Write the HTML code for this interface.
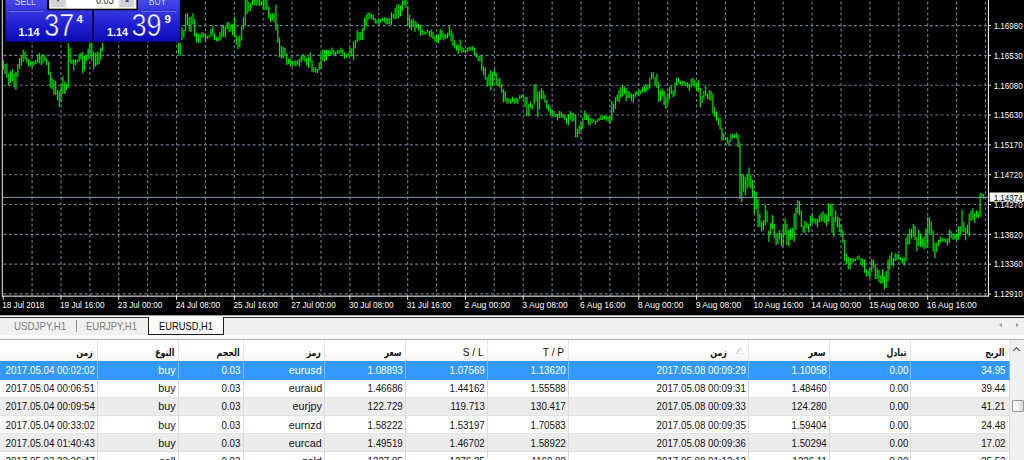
<!DOCTYPE html>
<html lang="en"><head><meta charset="utf-8"><title>EURUSD,H1</title>
<style>
html,body{margin:0;padding:0;background:#fff;}
body{width:1024px;height:460px;overflow:hidden;position:relative;font-family:"Liberation Sans",sans-serif;}
.chart{position:absolute;left:0;top:0;display:block}
.tabs{position:absolute;left:0;top:318px;width:1024px;height:17px;background:#f0f0f0;font-size:11px;color:#7d7d7d;}
.tabs .tab{position:absolute;top:1.7px;line-height:12px;display:inline-block;transform:scaleX(.884);transform-origin:0 0;white-space:nowrap}
.tabs .sep{position:absolute;left:76px;top:2px;width:1px;height:12.3px;background:#8a8a8a}
.atab{position:absolute;left:148px;top:-1px;width:73.6px;height:16.6px;background:#fff;border:1.1px solid #1e1e1e;border-top:none;border-right-width:1.5px;border-bottom-width:1.5px;color:#000}
.atab span{position:absolute;left:9.9px;top:2.7px;line-height:12px;display:inline-block;transform:scaleX(.85);transform-origin:0 0;white-space:nowrap}
.nl,.nr{position:absolute;top:5px;width:0;height:0;border-top:2.6px solid transparent;border-bottom:2.6px solid transparent}
.nl{left:999.4px;border-right:3.2px solid #9c9c9c}
.nr{left:1016.2px;border-left:3.2px solid #9c9c9c}
.band{position:absolute;left:0;top:335px;width:1024px;height:4.2px;background:#fafafa;border-bottom:1px solid #b2b2b2}
.grid{position:absolute;left:0;top:340.2px;width:1024px;height:120px;background:#fff;overflow:hidden;font-size:11px;color:#111}
.hdr{position:absolute;left:0;top:0;width:1010.2px;height:20.4px;background:linear-gradient(#fff,#fff 50%,#f4f4f4);border-bottom:1px solid #dadada}
.hc{position:absolute;top:0;height:20.4px;box-sizing:border-box;border-right:1px solid #e7e7e7;text-align:right;font-family:"DejaVu Sans","Liberation Sans",sans-serif;font-weight:bold;font-size:10.4px;color:#111;direction:rtl}
.hc span{position:absolute;right:3.4px;top:3.7px;line-height:16px;white-space:nowrap;display:inline-block;transform:scaleX(.755);transform-origin:100% 0}
.hc.lat{font-family:"Liberation Sans",sans-serif;font-weight:normal;font-size:11px;direction:ltr}
.hc.lat span{top:3.8px;transform:scaleX(.92);transform-origin:100% 0}
.sort{position:absolute;left:736.2px;top:7.3px;display:block}
.row{position:absolute;left:0;width:1010.2px;height:18.22px;background:#fff;border-bottom:1px solid #e2e2e2;box-sizing:border-box}
.row.alt{background:#ececec}
.row.sel{background:#3399ff;color:#fff;border-bottom-color:#3399ff}
.c{position:absolute;top:0;height:100%;box-sizing:border-box;border-right:1px solid #dcdcdc;}
.row.sel .c{border-right-color:#7fbcff}
.c span{position:absolute;right:1.9px;top:2.6px;line-height:13px;white-space:nowrap;display:inline-block;transform:scaleX(.885);transform-origin:100% 0}
.c span.a{transform:scaleX(.98)}
.sb{position:absolute;left:1010.2px;top:0;width:15px;height:121px;background:#f0f0f0}
.sb .up{position:absolute;left:4.2px;top:7.4px;width:5px;height:5px;border-left:1.7px solid #4a4a4a;border-top:1.7px solid #4a4a4a;transform:rotate(45deg) ;box-sizing:border-box}
.sb .thumb{position:absolute;left:1.8px;top:60px;width:11.6px;height:12.2px;background:linear-gradient(90deg,#fff 20%,#d9d9d9);border:1px solid #969696;box-sizing:border-box;border-radius:1px}
</style></head>
<body>
<svg class="chart" width="1024" height="318" viewBox="0 0 1024 318">
<rect x="0" y="0" width="1024" height="318" fill="#000"/>
<g stroke="#778899" stroke-width="1.15" stroke-dasharray="2.9 2.517" fill="none" opacity="0.92">
<line x1="32.09" y1="-3.82" x2="32.09" y2="296"/>
<line x1="60.98" y1="-3.82" x2="60.98" y2="296"/>
<line x1="89.87" y1="-3.82" x2="89.87" y2="296"/>
<line x1="118.76" y1="-3.82" x2="118.76" y2="296"/>
<line x1="147.65" y1="-3.82" x2="147.65" y2="296"/>
<line x1="176.54" y1="-3.82" x2="176.54" y2="296"/>
<line x1="205.43" y1="-3.82" x2="205.43" y2="296"/>
<line x1="234.32" y1="-3.82" x2="234.32" y2="296"/>
<line x1="263.21" y1="-3.82" x2="263.21" y2="296"/>
<line x1="292.10" y1="-3.82" x2="292.10" y2="296"/>
<line x1="320.99" y1="-3.82" x2="320.99" y2="296"/>
<line x1="349.88" y1="-3.82" x2="349.88" y2="296"/>
<line x1="378.77" y1="-3.82" x2="378.77" y2="296"/>
<line x1="407.66" y1="-3.82" x2="407.66" y2="296"/>
<line x1="436.55" y1="-3.82" x2="436.55" y2="296"/>
<line x1="465.44" y1="-3.82" x2="465.44" y2="296"/>
<line x1="494.33" y1="-3.82" x2="494.33" y2="296"/>
<line x1="523.22" y1="-3.82" x2="523.22" y2="296"/>
<line x1="552.11" y1="-3.82" x2="552.11" y2="296"/>
<line x1="581.00" y1="-3.82" x2="581.00" y2="296"/>
<line x1="609.89" y1="-3.82" x2="609.89" y2="296"/>
<line x1="638.78" y1="-3.82" x2="638.78" y2="296"/>
<line x1="667.67" y1="-3.82" x2="667.67" y2="296"/>
<line x1="696.56" y1="-3.82" x2="696.56" y2="296"/>
<line x1="725.45" y1="-3.82" x2="725.45" y2="296"/>
<line x1="754.34" y1="-3.82" x2="754.34" y2="296"/>
<line x1="783.23" y1="-3.82" x2="783.23" y2="296"/>
<line x1="812.12" y1="-3.82" x2="812.12" y2="296"/>
<line x1="841.01" y1="-3.82" x2="841.01" y2="296"/>
<line x1="869.90" y1="-3.82" x2="869.90" y2="296"/>
<line x1="898.79" y1="-3.82" x2="898.79" y2="296"/>
<line x1="927.68" y1="-3.82" x2="927.68" y2="296"/>
<line x1="956.57" y1="-3.82" x2="956.57" y2="296"/>
<line x1="985.46" y1="-3.82" x2="985.46" y2="296"/>
<line x1="182.26" y1="25.55" x2="988" y2="25.55"/>
<line x1="3.50" y1="55.38" x2="988" y2="55.38"/>
<line x1="3.50" y1="85.21" x2="988" y2="85.21"/>
<line x1="3.50" y1="115.04" x2="988" y2="115.04"/>
<line x1="3.50" y1="144.87" x2="988" y2="144.87"/>
<line x1="3.50" y1="174.70" x2="988" y2="174.70"/>
<line x1="3.50" y1="204.53" x2="988" y2="204.53"/>
<line x1="3.50" y1="234.36" x2="988" y2="234.36"/>
<line x1="3.50" y1="264.19" x2="988" y2="264.19"/>
<line x1="3.50" y1="293.80" x2="988" y2="293.80"/>
</g>
<g stroke="#00ff00" stroke-opacity="0.15" stroke-width="2.0" fill="none">
<path d="M3.32 60.3V69.6M5.12 64.0V74.0M6.93 63.4V78.0M8.73 73.5V86.0M10.54 71.0V83.0M12.34 69.0V81.0M14.15 73.5V87.6M15.95 72.0V90.0M17.76 64.0V76.7M19.57 58.0V69.0M21.37 56.0V66.0M23.18 49.8V61.8M24.98 51.6V59.5M26.79 57.0V62.6M28.59 59.5V66.5M30.40 61.0V66.5M32.20 61.8V67.3M34.01 61.0V65.0M35.81 60.0V64.0M37.62 54.8V62.6M39.43 53.0V63.4M41.23 55.5V65.0M43.04 54.0V63.4M44.84 55.5V61.0M46.65 58.0V65.0M48.45 61.8V75.0M50.26 72.0V87.6M52.06 78.0V89.0M53.87 79.8V94.7M55.68 81.0V94.7M57.48 90.0V100.0M59.29 90.8V107.0M61.09 84.5V101.7M62.90 76.0V94.0M64.70 81.4V94.0M66.51 83.7V90.0M68.31 43.0V87.6M70.12 47.7V62.6M71.92 59.5V64.0M73.73 59.5V70.4M75.54 59.5V65.0M77.34 59.5V62.6M79.15 54.0V61.8M80.95 53.0V59.5M82.76 51.6V73.5M84.56 55.5V70.4M86.37 54.8V61.0M88.17 48.5V59.5M89.98 43.0V56.0M91.79 43.0V61.0M93.59 51.6V69.6M95.40 53.0V66.5M97.20 51.6V65.0M99.01 52.4V64.0M100.81 47.7V60.0M102.62 43.0V51.6M178.45 43.0V54.0M180.25 43.0V55.5M182.06 27.4V40.0M183.87 29.7V37.6M185.67 14.0V31.3M187.48 13.3V25.0M189.28 17.2V31.3M191.09 16.4V32.0M192.89 13.3V24.3M194.70 18.8V36.8M196.50 32.9V42.3M198.31 33.6V43.0M200.12 34.4V43.0M201.92 32.0V37.6M203.73 32.9V37.6M205.53 33.6V41.5M207.34 36.0V39.0M209.14 35.2V37.6M210.95 29.0V36.8M212.75 25.8V35.2M214.56 33.6V40.0M216.36 36.8V41.5M218.17 36.8V41.5M219.98 32.0V40.7M221.78 25.0V37.6M223.59 25.0V36.8M225.39 26.6V37.6M227.20 22.0V29.0M229.00 22.0V32.0M230.81 25.0V31.3M232.61 24.3V35.2M234.42 17.2V36.8M236.22 35.2V44.6M238.03 36.8V49.3M239.84 35.2V47.0M241.64 25.8V40.7M243.45 17.2V29.7M245.25 -2.0V25.8M247.06 -2.0V14.0M248.86 1.5V11.7M250.67 3.0V11.0M252.47 -2.0V4.7M254.28 -2.0V5.5M256.09 -2.0V5.5M257.89 -2.0V5.5M259.70 -2.0V6.3M261.50 1.5V5.5M263.31 -2.0V8.6M265.11 -2.0V10.0M266.92 -2.0V10.0M268.72 6.3V18.8M270.53 13.3V22.0M272.33 13.3V20.3M274.14 13.3V22.0M275.95 4.7V30.5M277.75 24.3V43.0M279.56 37.6V57.0M281.36 46.0V58.7M283.17 47.0V58.0M284.97 47.7V56.3M286.78 53.2V65.0M288.58 58.7V64.2M290.39 58.7V66.5M292.20 61.0V66.5M294.00 61.0V65.7M295.81 60.3V66.5M297.61 60.3V65.0M299.42 58.7V66.5M301.22 55.5V62.6M303.03 54.0V60.3M304.83 55.5V61.8M306.64 58.0V65.0M308.44 57.0V68.0M310.25 52.4V62.6M312.06 60.3V72.0M313.86 67.3V72.0M315.67 67.3V72.5M317.47 69.0V73.0M319.28 62.6V70.4M321.08 53.2V69.0M322.89 49.3V61.0M324.69 50.0V61.8M326.50 50.0V60.3M328.31 50.0V56.3M330.11 50.0V55.5M331.92 47.7V54.8M333.72 50.0V54.8M335.53 51.6V56.3M337.33 50.0V54.0M339.14 50.0V54.0M340.94 47.7V53.2M342.75 49.3V56.3M344.56 52.4V58.7M346.36 54.8V58.0M348.17 53.2V57.0M349.97 47.7V56.3M351.78 48.5V56.3M353.58 41.5V60.3M355.39 40.0V48.5M357.19 29.7V42.3M359.00 32.0V40.7M360.80 32.0V40.0M362.61 28.2V40.0M364.42 18.0V30.5M366.22 14.9V25.8M368.03 12.5V20.3M369.83 12.5V18.8M371.64 14.0V19.6M373.44 14.9V20.3M375.25 18.0V23.5M377.05 19.6V23.5M378.86 19.6V25.0M380.67 18.8V22.7M382.47 18.0V21.0M384.28 17.2V22.7M386.08 17.2V24.3M387.89 18.0V24.3M389.69 18.0V24.3M391.50 12.5V25.0M393.30 14.0V18.0M395.11 7.8V19.6M396.91 4.7V18.8M398.72 4.0V18.0M400.53 5.5V16.4M402.33 0.8V11.0M404.14 -2.0V5.5M405.94 -2.0V7.8M407.75 6.3V25.8M409.55 14.9V28.2M411.36 19.4V30.3M413.16 18.6V27.2M414.97 21.0V31.9M416.78 22.5V28.0M418.58 24.0V30.3M420.39 25.6V35.8M422.19 29.6V35.0M424.00 31.0V35.0M425.80 31.9V34.3M427.61 29.6V32.7M429.41 31.0V36.6M431.22 29.6V37.4M433.02 31.9V39.0M434.83 35.8V41.3M436.64 35.0V42.0M438.44 34.3V43.6M440.25 28.8V39.7M442.05 30.3V38.2M443.86 33.5V40.5M445.66 34.3V39.0M447.47 32.7V38.2M449.27 24.9V36.6M451.08 29.6V41.3M452.88 33.5V46.0M454.69 40.5V48.3M456.50 45.2V50.7M458.30 44.4V53.8M460.11 39.7V50.7M461.91 46.8V53.0M463.72 48.3V52.3M465.52 49.9V53.0M467.33 47.6V52.3M469.13 46.8V50.7M470.94 46.8V50.7M472.75 46.0V50.7M474.55 47.6V55.4M476.36 53.0V57.7M478.16 56.2V60.9M479.97 55.4V61.6M481.77 55.4V71.0M483.58 66.3V74.9M485.38 67.8V79.6M487.19 77.2V86.6M489.00 74.0V85.8M490.80 70.2V90.5M492.61 71.7V85.8M494.41 69.4V76.4M496.22 73.3V85.0M498.02 78.8V85.8M499.83 78.0V87.4M501.63 84.3V92.9M503.44 89.0V102.3M505.24 91.3V101.5M507.05 97.6V103.8M508.86 98.3V103.0M510.66 99.0V103.8M512.47 96.8V102.3M514.27 98.3V103.8M516.08 97.6V103.0M517.88 98.3V103.8M519.69 95.2V99.0M521.49 95.2V98.3M523.30 94.4V98.3M525.11 96.8V107.0M526.91 96.8V116.3M528.72 103.8V116.3M530.52 101.5V107.7M532.33 104.6V109.3M534.13 84.3V104.6M535.94 84.3V101.5M537.74 92.0V117.0M539.55 91.3V109.3M541.35 88.2V99.0M543.16 90.5V99.0M544.97 94.4V103.0M546.77 100.0V108.5M548.58 104.6V110.9M550.38 107.7V115.6M552.19 110.0V115.6M553.99 110.9V117.0M555.80 114.0V117.0M557.60 114.0V120.3M559.41 110.9V117.9M561.22 111.6V117.9M563.02 114.0V117.9M564.83 114.8V120.3M566.63 117.9V124.2M568.44 114.0V125.0M570.24 110.9V119.5M572.05 112.6V121.7M573.85 113.4V121.0M575.66 114.5V137.2M577.46 128.6V137.2M579.27 125.5V134.0M581.08 122.3V131.0M582.88 117.6V128.6M584.69 110.6V120.0M586.49 113.7V120.0M588.30 115.3V124.7M590.10 118.4V125.5M591.91 118.4V123.0M593.71 119.2V122.3M595.52 120.8V124.7M597.33 119.2V122.3M599.13 117.6V120.8M600.94 116.0V120.0M602.74 115.3V120.0M604.55 115.3V119.2M606.35 116.0V120.8M608.16 116.9V121.6M609.96 116.0V123.9M611.77 101.2V120.8M613.57 103.6V112.2M615.38 97.3V109.0M617.19 95.0V101.2M618.99 90.3V102.0M620.80 87.1V98.0M622.60 84.8V96.5M624.41 86.3V94.2M626.21 87.9V101.2M628.02 91.0V98.0M629.82 91.8V98.0M631.63 93.4V101.2M633.44 94.2V102.8M635.24 91.8V97.3M637.05 91.0V95.0M638.85 89.5V95.7M640.66 90.3V94.2M642.46 87.1V91.8M644.27 85.6V92.6M646.07 84.0V91.8M647.88 84.8V90.3M649.68 77.7V88.7M651.49 72.3V79.3M653.30 72.3V78.5M655.10 77.0V85.6M656.91 73.8V87.9M658.71 82.4V102.0M660.52 90.3V101.2M662.32 88.7V96.5M664.13 91.0V105.0M665.93 96.5V109.0M667.74 93.4V104.3M669.55 87.1V99.6M671.35 85.6V94.2M673.16 90.3V97.3M674.96 82.4V95.7M676.77 77.7V85.6M678.57 77.7V83.2M680.38 80.9V84.8M682.18 80.9V84.8M683.99 80.9V85.6M685.79 81.6V86.3M687.60 82.4V87.9M689.41 84.0V91.0M691.21 78.6V87.2M693.02 77.8V84.9M694.82 80.2V87.2M696.63 82.5V91.0M698.43 80.2V91.9M700.24 88.0V107.6M702.04 95.8V102.9M703.85 91.0V99.7M705.66 85.6V95.8M707.46 93.5V99.0M709.27 90.3V99.7M711.07 91.0V100.5M712.88 93.5V113.8M714.68 106.8V117.0M716.49 111.5V120.9M718.29 117.7V125.6M720.10 117.7V129.5M721.90 127.9V140.8M723.71 133.4V140.0M725.52 137.2V140.3M727.32 137.1V143.5M729.13 140.3V146.2M730.93 133.7V141.5M732.74 133.7V138.7M734.54 134.1V137.9M736.35 132.5V138.7M738.15 134.5V147.2M739.96 143.3V198.9M741.76 173.8V202.0M743.57 174.6V191.8M745.38 177.0V195.0M747.18 173.8V188.7M748.99 167.6V187.0M750.79 175.4V188.7M752.60 180.0V197.6M754.40 190.6V213.6M756.21 191.7V209.0M758.01 199.3V227.0M759.82 213.6V227.0M761.63 221.5V231.6M763.43 220.0V230.0M765.24 204.3V225.4M767.04 210.5V222.3M768.85 230.9V241.8M770.65 223.0V234.8M772.46 215.2V229.3M774.26 223.8V237.9M776.07 233.2V245.0M777.88 233.2V244.2M779.68 230.0V239.5M781.49 233.2V246.5M783.29 224.6V245.7M785.10 218.3V234.8M786.90 223.8V245.0M788.71 230.0V246.5M790.51 228.5V239.5M792.32 227.7V238.7M794.12 213.6V241.8M795.93 207.4V230.0M797.74 200.3V213.6M799.54 201.0V215.2M801.35 210.5V227.0M803.15 225.4V232.4M804.96 220.7V233.2M806.76 222.3V227.7M808.57 224.6V232.4M810.37 216.0V226.2M812.18 213.6V223.8M813.99 218.3V222.3M815.79 218.3V224.6M817.60 219.0V227.0M819.40 215.2V222.3M821.21 212.9V221.5M823.01 211.3V221.5M824.82 213.6V223.0M826.62 214.4V226.2M828.43 203.5V221.5M830.23 203.5V216.0M832.04 203.5V232.8M833.85 216.8V237.0M835.65 210.5V222.3M837.46 216.8V227.2M839.26 217.6V232.0M841.07 224.4V235.5M842.87 230.3V242.4M844.68 239.7V261.0M846.48 254.0V264.3M848.29 257.2V269.0M850.10 258.0V269.7M851.90 258.0V264.3M853.71 258.0V262.0M855.51 258.8V261.0M857.32 256.4V259.6M859.12 255.6V259.6M860.93 258.0V265.0M862.73 258.8V266.6M864.54 259.6V272.9M866.34 269.0V276.8M868.15 270.5V276.0M869.96 268.2V278.3M871.76 258.8V272.0M873.57 259.6V268.2M875.37 264.3V279.0M877.18 268.2V279.0M878.98 269.7V282.3M880.79 275.2V283.8M882.59 269.0V283.0M884.40 276.0V289.3M886.21 271.3V287.7M888.01 259.6V281.5M889.82 255.6V269.7M891.62 252.5V265.0M893.43 258.0V266.6M895.23 253.3V261.0M897.04 254.0V260.3M898.84 254.0V259.6M900.65 257.2V260.3M902.45 258.0V263.5M904.26 257.2V265.8M906.07 237.7V261.0M907.87 233.8V244.8M909.68 228.7V244.0M911.48 229.1V238.5M913.29 224.0V237.0M915.09 225.7V240.1M916.90 237.0V251.3M918.70 229.5V246.0M920.51 234.2V246.8M922.32 238.5V247.1M924.12 236.6V249.1M925.93 228.7V248.3M927.73 216.8V247.5M929.54 217.6V234.2M931.34 221.5V233.4M933.15 230.3V251.5M934.95 242.8V258.0M936.76 242.8V252.2M938.56 239.7V246.0M940.37 236.6V242.4M942.18 237.7V241.3M943.98 238.1V242.0M945.79 238.5V242.8M947.59 238.5V245.6M949.40 229.5V242.8M951.20 231.1V238.1M953.01 233.8V239.7M954.81 233.8V239.3M956.62 233.8V241.3M958.43 226.2V239.5M960.23 226.2V235.6M962.04 209.7V231.6M963.84 222.3V232.4M965.65 227.7V240.3M967.45 224.6V234.0M969.26 213.6V236.3M971.06 210.5V220.7M972.87 208.2V220.0M974.67 212.9V223.0M976.48 210.5V217.6M978.29 212.0V218.3M980.09 193.3V216.8M981.90 193.3V198.0M983.70 194.0V198.8"/>
</g>
<g stroke="#00ee00" stroke-width="1.0" fill="none">
<path d="M3.32 60.3V69.6M5.12 64.0V74.0M6.93 63.4V78.0M8.73 73.5V86.0M10.54 71.0V83.0M12.34 69.0V81.0M14.15 73.5V87.6M15.95 72.0V90.0M17.76 64.0V76.7M19.57 58.0V69.0M21.37 56.0V66.0M23.18 49.8V61.8M24.98 51.6V59.5M26.79 57.0V62.6M28.59 59.5V66.5M30.40 61.0V66.5M32.20 61.8V67.3M34.01 61.0V65.0M35.81 60.0V64.0M37.62 54.8V62.6M39.43 53.0V63.4M41.23 55.5V65.0M43.04 54.0V63.4M44.84 55.5V61.0M46.65 58.0V65.0M48.45 61.8V75.0M50.26 72.0V87.6M52.06 78.0V89.0M53.87 79.8V94.7M55.68 81.0V94.7M57.48 90.0V100.0M59.29 90.8V107.0M61.09 84.5V101.7M62.90 76.0V94.0M64.70 81.4V94.0M66.51 83.7V90.0M68.31 43.0V87.6M70.12 47.7V62.6M71.92 59.5V64.0M73.73 59.5V70.4M75.54 59.5V65.0M77.34 59.5V62.6M79.15 54.0V61.8M80.95 53.0V59.5M82.76 51.6V73.5M84.56 55.5V70.4M86.37 54.8V61.0M88.17 48.5V59.5M89.98 43.0V56.0M91.79 43.0V61.0M93.59 51.6V69.6M95.40 53.0V66.5M97.20 51.6V65.0M99.01 52.4V64.0M100.81 47.7V60.0M102.62 43.0V51.6M178.45 43.0V54.0M180.25 43.0V55.5M182.06 27.4V40.0M183.87 29.7V37.6M185.67 14.0V31.3M187.48 13.3V25.0M189.28 17.2V31.3M191.09 16.4V32.0M192.89 13.3V24.3M194.70 18.8V36.8M196.50 32.9V42.3M198.31 33.6V43.0M200.12 34.4V43.0M201.92 32.0V37.6M203.73 32.9V37.6M205.53 33.6V41.5M207.34 36.0V39.0M209.14 35.2V37.6M210.95 29.0V36.8M212.75 25.8V35.2M214.56 33.6V40.0M216.36 36.8V41.5M218.17 36.8V41.5M219.98 32.0V40.7M221.78 25.0V37.6M223.59 25.0V36.8M225.39 26.6V37.6M227.20 22.0V29.0M229.00 22.0V32.0M230.81 25.0V31.3M232.61 24.3V35.2M234.42 17.2V36.8M236.22 35.2V44.6M238.03 36.8V49.3M239.84 35.2V47.0M241.64 25.8V40.7M243.45 17.2V29.7M245.25 -2.0V25.8M247.06 -2.0V14.0M248.86 1.5V11.7M250.67 3.0V11.0M252.47 -2.0V4.7M254.28 -2.0V5.5M256.09 -2.0V5.5M257.89 -2.0V5.5M259.70 -2.0V6.3M261.50 1.5V5.5M263.31 -2.0V8.6M265.11 -2.0V10.0M266.92 -2.0V10.0M268.72 6.3V18.8M270.53 13.3V22.0M272.33 13.3V20.3M274.14 13.3V22.0M275.95 4.7V30.5M277.75 24.3V43.0M279.56 37.6V57.0M281.36 46.0V58.7M283.17 47.0V58.0M284.97 47.7V56.3M286.78 53.2V65.0M288.58 58.7V64.2M290.39 58.7V66.5M292.20 61.0V66.5M294.00 61.0V65.7M295.81 60.3V66.5M297.61 60.3V65.0M299.42 58.7V66.5M301.22 55.5V62.6M303.03 54.0V60.3M304.83 55.5V61.8M306.64 58.0V65.0M308.44 57.0V68.0M310.25 52.4V62.6M312.06 60.3V72.0M313.86 67.3V72.0M315.67 67.3V72.5M317.47 69.0V73.0M319.28 62.6V70.4M321.08 53.2V69.0M322.89 49.3V61.0M324.69 50.0V61.8M326.50 50.0V60.3M328.31 50.0V56.3M330.11 50.0V55.5M331.92 47.7V54.8M333.72 50.0V54.8M335.53 51.6V56.3M337.33 50.0V54.0M339.14 50.0V54.0M340.94 47.7V53.2M342.75 49.3V56.3M344.56 52.4V58.7M346.36 54.8V58.0M348.17 53.2V57.0M349.97 47.7V56.3M351.78 48.5V56.3M353.58 41.5V60.3M355.39 40.0V48.5M357.19 29.7V42.3M359.00 32.0V40.7M360.80 32.0V40.0M362.61 28.2V40.0M364.42 18.0V30.5M366.22 14.9V25.8M368.03 12.5V20.3M369.83 12.5V18.8M371.64 14.0V19.6M373.44 14.9V20.3M375.25 18.0V23.5M377.05 19.6V23.5M378.86 19.6V25.0M380.67 18.8V22.7M382.47 18.0V21.0M384.28 17.2V22.7M386.08 17.2V24.3M387.89 18.0V24.3M389.69 18.0V24.3M391.50 12.5V25.0M393.30 14.0V18.0M395.11 7.8V19.6M396.91 4.7V18.8M398.72 4.0V18.0M400.53 5.5V16.4M402.33 0.8V11.0M404.14 -2.0V5.5M405.94 -2.0V7.8M407.75 6.3V25.8M409.55 14.9V28.2M411.36 19.4V30.3M413.16 18.6V27.2M414.97 21.0V31.9M416.78 22.5V28.0M418.58 24.0V30.3M420.39 25.6V35.8M422.19 29.6V35.0M424.00 31.0V35.0M425.80 31.9V34.3M427.61 29.6V32.7M429.41 31.0V36.6M431.22 29.6V37.4M433.02 31.9V39.0M434.83 35.8V41.3M436.64 35.0V42.0M438.44 34.3V43.6M440.25 28.8V39.7M442.05 30.3V38.2M443.86 33.5V40.5M445.66 34.3V39.0M447.47 32.7V38.2M449.27 24.9V36.6M451.08 29.6V41.3M452.88 33.5V46.0M454.69 40.5V48.3M456.50 45.2V50.7M458.30 44.4V53.8M460.11 39.7V50.7M461.91 46.8V53.0M463.72 48.3V52.3M465.52 49.9V53.0M467.33 47.6V52.3M469.13 46.8V50.7M470.94 46.8V50.7M472.75 46.0V50.7M474.55 47.6V55.4M476.36 53.0V57.7M478.16 56.2V60.9M479.97 55.4V61.6M481.77 55.4V71.0M483.58 66.3V74.9M485.38 67.8V79.6M487.19 77.2V86.6M489.00 74.0V85.8M490.80 70.2V90.5M492.61 71.7V85.8M494.41 69.4V76.4M496.22 73.3V85.0M498.02 78.8V85.8M499.83 78.0V87.4M501.63 84.3V92.9M503.44 89.0V102.3M505.24 91.3V101.5M507.05 97.6V103.8M508.86 98.3V103.0M510.66 99.0V103.8M512.47 96.8V102.3M514.27 98.3V103.8M516.08 97.6V103.0M517.88 98.3V103.8M519.69 95.2V99.0M521.49 95.2V98.3M523.30 94.4V98.3M525.11 96.8V107.0M526.91 96.8V116.3M528.72 103.8V116.3M530.52 101.5V107.7M532.33 104.6V109.3M534.13 84.3V104.6M535.94 84.3V101.5M537.74 92.0V117.0M539.55 91.3V109.3M541.35 88.2V99.0M543.16 90.5V99.0M544.97 94.4V103.0M546.77 100.0V108.5M548.58 104.6V110.9M550.38 107.7V115.6M552.19 110.0V115.6M553.99 110.9V117.0M555.80 114.0V117.0M557.60 114.0V120.3M559.41 110.9V117.9M561.22 111.6V117.9M563.02 114.0V117.9M564.83 114.8V120.3M566.63 117.9V124.2M568.44 114.0V125.0M570.24 110.9V119.5M572.05 112.6V121.7M573.85 113.4V121.0M575.66 114.5V137.2M577.46 128.6V137.2M579.27 125.5V134.0M581.08 122.3V131.0M582.88 117.6V128.6M584.69 110.6V120.0M586.49 113.7V120.0M588.30 115.3V124.7M590.10 118.4V125.5M591.91 118.4V123.0M593.71 119.2V122.3M595.52 120.8V124.7M597.33 119.2V122.3M599.13 117.6V120.8M600.94 116.0V120.0M602.74 115.3V120.0M604.55 115.3V119.2M606.35 116.0V120.8M608.16 116.9V121.6M609.96 116.0V123.9M611.77 101.2V120.8M613.57 103.6V112.2M615.38 97.3V109.0M617.19 95.0V101.2M618.99 90.3V102.0M620.80 87.1V98.0M622.60 84.8V96.5M624.41 86.3V94.2M626.21 87.9V101.2M628.02 91.0V98.0M629.82 91.8V98.0M631.63 93.4V101.2M633.44 94.2V102.8M635.24 91.8V97.3M637.05 91.0V95.0M638.85 89.5V95.7M640.66 90.3V94.2M642.46 87.1V91.8M644.27 85.6V92.6M646.07 84.0V91.8M647.88 84.8V90.3M649.68 77.7V88.7M651.49 72.3V79.3M653.30 72.3V78.5M655.10 77.0V85.6M656.91 73.8V87.9M658.71 82.4V102.0M660.52 90.3V101.2M662.32 88.7V96.5M664.13 91.0V105.0M665.93 96.5V109.0M667.74 93.4V104.3M669.55 87.1V99.6M671.35 85.6V94.2M673.16 90.3V97.3M674.96 82.4V95.7M676.77 77.7V85.6M678.57 77.7V83.2M680.38 80.9V84.8M682.18 80.9V84.8M683.99 80.9V85.6M685.79 81.6V86.3M687.60 82.4V87.9M689.41 84.0V91.0M691.21 78.6V87.2M693.02 77.8V84.9M694.82 80.2V87.2M696.63 82.5V91.0M698.43 80.2V91.9M700.24 88.0V107.6M702.04 95.8V102.9M703.85 91.0V99.7M705.66 85.6V95.8M707.46 93.5V99.0M709.27 90.3V99.7M711.07 91.0V100.5M712.88 93.5V113.8M714.68 106.8V117.0M716.49 111.5V120.9M718.29 117.7V125.6M720.10 117.7V129.5M721.90 127.9V140.8M723.71 133.4V140.0M725.52 137.2V140.3M727.32 137.1V143.5M729.13 140.3V146.2M730.93 133.7V141.5M732.74 133.7V138.7M734.54 134.1V137.9M736.35 132.5V138.7M738.15 134.5V147.2M739.96 143.3V198.9M741.76 173.8V202.0M743.57 174.6V191.8M745.38 177.0V195.0M747.18 173.8V188.7M748.99 167.6V187.0M750.79 175.4V188.7M752.60 180.0V197.6M754.40 190.6V213.6M756.21 191.7V209.0M758.01 199.3V227.0M759.82 213.6V227.0M761.63 221.5V231.6M763.43 220.0V230.0M765.24 204.3V225.4M767.04 210.5V222.3M768.85 230.9V241.8M770.65 223.0V234.8M772.46 215.2V229.3M774.26 223.8V237.9M776.07 233.2V245.0M777.88 233.2V244.2M779.68 230.0V239.5M781.49 233.2V246.5M783.29 224.6V245.7M785.10 218.3V234.8M786.90 223.8V245.0M788.71 230.0V246.5M790.51 228.5V239.5M792.32 227.7V238.7M794.12 213.6V241.8M795.93 207.4V230.0M797.74 200.3V213.6M799.54 201.0V215.2M801.35 210.5V227.0M803.15 225.4V232.4M804.96 220.7V233.2M806.76 222.3V227.7M808.57 224.6V232.4M810.37 216.0V226.2M812.18 213.6V223.8M813.99 218.3V222.3M815.79 218.3V224.6M817.60 219.0V227.0M819.40 215.2V222.3M821.21 212.9V221.5M823.01 211.3V221.5M824.82 213.6V223.0M826.62 214.4V226.2M828.43 203.5V221.5M830.23 203.5V216.0M832.04 203.5V232.8M833.85 216.8V237.0M835.65 210.5V222.3M837.46 216.8V227.2M839.26 217.6V232.0M841.07 224.4V235.5M842.87 230.3V242.4M844.68 239.7V261.0M846.48 254.0V264.3M848.29 257.2V269.0M850.10 258.0V269.7M851.90 258.0V264.3M853.71 258.0V262.0M855.51 258.8V261.0M857.32 256.4V259.6M859.12 255.6V259.6M860.93 258.0V265.0M862.73 258.8V266.6M864.54 259.6V272.9M866.34 269.0V276.8M868.15 270.5V276.0M869.96 268.2V278.3M871.76 258.8V272.0M873.57 259.6V268.2M875.37 264.3V279.0M877.18 268.2V279.0M878.98 269.7V282.3M880.79 275.2V283.8M882.59 269.0V283.0M884.40 276.0V289.3M886.21 271.3V287.7M888.01 259.6V281.5M889.82 255.6V269.7M891.62 252.5V265.0M893.43 258.0V266.6M895.23 253.3V261.0M897.04 254.0V260.3M898.84 254.0V259.6M900.65 257.2V260.3M902.45 258.0V263.5M904.26 257.2V265.8M906.07 237.7V261.0M907.87 233.8V244.8M909.68 228.7V244.0M911.48 229.1V238.5M913.29 224.0V237.0M915.09 225.7V240.1M916.90 237.0V251.3M918.70 229.5V246.0M920.51 234.2V246.8M922.32 238.5V247.1M924.12 236.6V249.1M925.93 228.7V248.3M927.73 216.8V247.5M929.54 217.6V234.2M931.34 221.5V233.4M933.15 230.3V251.5M934.95 242.8V258.0M936.76 242.8V252.2M938.56 239.7V246.0M940.37 236.6V242.4M942.18 237.7V241.3M943.98 238.1V242.0M945.79 238.5V242.8M947.59 238.5V245.6M949.40 229.5V242.8M951.20 231.1V238.1M953.01 233.8V239.7M954.81 233.8V239.3M956.62 233.8V241.3M958.43 226.2V239.5M960.23 226.2V235.6M962.04 209.7V231.6M963.84 222.3V232.4M965.65 227.7V240.3M967.45 224.6V234.0M969.26 213.6V236.3M971.06 210.5V220.7M972.87 208.2V220.0M974.67 212.9V223.0M976.48 210.5V217.6M978.29 212.0V218.3M980.09 193.3V216.8M981.90 193.3V198.0M983.70 194.0V198.8"/>
</g>
<line x1="3" y1="197.4" x2="988" y2="197.4" stroke="#8a98aa" stroke-width="1"/>
<rect x="1.7" y="0" width="1.35" height="297" fill="#b4b4b4"/>
<rect x="987.9" y="0" width="1.1" height="296.6" fill="#e8e8e8"/>
<rect x="2" y="295.6" width="987" height="1.1" fill="#e8e8e8"/>
<g font-family="'Liberation Sans', sans-serif" font-size="9.8px" fill="#fff">
<rect x="988" y="25.05" width="3" height="1" fill="#e8e8e8"/>
<text x="993.7" y="28.85" textLength="28.9" lengthAdjust="spacingAndGlyphs">1.16980</text>
<rect x="988" y="54.88" width="3" height="1" fill="#e8e8e8"/>
<text x="993.7" y="58.68" textLength="28.9" lengthAdjust="spacingAndGlyphs">1.16530</text>
<rect x="988" y="84.71" width="3" height="1" fill="#e8e8e8"/>
<text x="993.7" y="88.51" textLength="28.9" lengthAdjust="spacingAndGlyphs">1.16080</text>
<rect x="988" y="114.54" width="3" height="1" fill="#e8e8e8"/>
<text x="993.7" y="118.34" textLength="28.9" lengthAdjust="spacingAndGlyphs">1.15630</text>
<rect x="988" y="144.37" width="3" height="1" fill="#e8e8e8"/>
<text x="993.7" y="148.17" textLength="28.9" lengthAdjust="spacingAndGlyphs">1.15170</text>
<rect x="988" y="174.20" width="3" height="1" fill="#e8e8e8"/>
<text x="993.7" y="178.00" textLength="28.9" lengthAdjust="spacingAndGlyphs">1.14720</text>
<rect x="988" y="204.03" width="3" height="1" fill="#e8e8e8"/>
<text x="993.7" y="207.83" textLength="28.9" lengthAdjust="spacingAndGlyphs">1.14270</text>
<rect x="988" y="233.86" width="3" height="1" fill="#e8e8e8"/>
<text x="993.7" y="237.66" textLength="28.9" lengthAdjust="spacingAndGlyphs">1.13820</text>
<rect x="988" y="263.69" width="3" height="1" fill="#e8e8e8"/>
<text x="993.7" y="267.49" textLength="28.9" lengthAdjust="spacingAndGlyphs">1.13360</text>
<rect x="988" y="293.52" width="3" height="1" fill="#e8e8e8"/>
<text x="993.7" y="297.32" textLength="28.9" lengthAdjust="spacingAndGlyphs">1.12910</text>
</g>
<rect x="989.6" y="192.5" width="35" height="9.2" fill="#fff"/>
<text x="993.7" y="200.5" font-family="'Liberation Sans', sans-serif" font-size="9.8px" fill="#000" textLength="28.9" lengthAdjust="spacingAndGlyphs">1.14374</text>
<g font-family="'Liberation Sans', sans-serif" font-size="9px" fill="#fff">
<rect x="2.70" y="296" width="1" height="3.8" fill="#e8e8e8"/>
<text x="2.30" y="308.2" textLength="42.0" lengthAdjust="spacingAndGlyphs">18 Jul 2018</text>
<rect x="60.48" y="296" width="1" height="3.8" fill="#e8e8e8"/>
<text x="60.08" y="308.2" textLength="44.5" lengthAdjust="spacingAndGlyphs">19 Jul 16:00</text>
<rect x="118.26" y="296" width="1" height="3.8" fill="#e8e8e8"/>
<text x="117.86" y="308.2" textLength="44.5" lengthAdjust="spacingAndGlyphs">23 Jul 00:00</text>
<rect x="176.04" y="296" width="1" height="3.8" fill="#e8e8e8"/>
<text x="175.64" y="308.2" textLength="44.5" lengthAdjust="spacingAndGlyphs">24 Jul 08:00</text>
<rect x="233.82" y="296" width="1" height="3.8" fill="#e8e8e8"/>
<text x="233.42" y="308.2" textLength="44.5" lengthAdjust="spacingAndGlyphs">25 Jul 16:00</text>
<rect x="291.60" y="296" width="1" height="3.8" fill="#e8e8e8"/>
<text x="291.20" y="308.2" textLength="44.5" lengthAdjust="spacingAndGlyphs">27 Jul 00:00</text>
<rect x="349.38" y="296" width="1" height="3.8" fill="#e8e8e8"/>
<text x="348.98" y="308.2" textLength="44.5" lengthAdjust="spacingAndGlyphs">30 Jul 08:00</text>
<rect x="407.16" y="296" width="1" height="3.8" fill="#e8e8e8"/>
<text x="406.76" y="308.2" textLength="44.5" lengthAdjust="spacingAndGlyphs">31 Jul 16:00</text>
<rect x="464.94" y="296" width="1" height="3.8" fill="#e8e8e8"/>
<text x="464.54" y="308.2" textLength="45.5" lengthAdjust="spacingAndGlyphs">2 Aug 00:00</text>
<rect x="522.72" y="296" width="1" height="3.8" fill="#e8e8e8"/>
<text x="522.32" y="308.2" textLength="45.5" lengthAdjust="spacingAndGlyphs">3 Aug 08:00</text>
<rect x="580.50" y="296" width="1" height="3.8" fill="#e8e8e8"/>
<text x="580.10" y="308.2" textLength="45.5" lengthAdjust="spacingAndGlyphs">6 Aug 16:00</text>
<rect x="638.28" y="296" width="1" height="3.8" fill="#e8e8e8"/>
<text x="637.88" y="308.2" textLength="45.5" lengthAdjust="spacingAndGlyphs">8 Aug 00:00</text>
<rect x="696.06" y="296" width="1" height="3.8" fill="#e8e8e8"/>
<text x="695.66" y="308.2" textLength="45.5" lengthAdjust="spacingAndGlyphs">9 Aug 08:00</text>
<rect x="753.84" y="296" width="1" height="3.8" fill="#e8e8e8"/>
<text x="753.44" y="308.2" textLength="50.0" lengthAdjust="spacingAndGlyphs">10 Aug 16:00</text>
<rect x="811.62" y="296" width="1" height="3.8" fill="#e8e8e8"/>
<text x="811.22" y="308.2" textLength="50.0" lengthAdjust="spacingAndGlyphs">14 Aug 00:00</text>
<rect x="869.40" y="296" width="1" height="3.8" fill="#e8e8e8"/>
<text x="869.00" y="308.2" textLength="50.0" lengthAdjust="spacingAndGlyphs">15 Aug 08:00</text>
<rect x="927.18" y="296" width="1" height="3.8" fill="#e8e8e8"/>
<text x="926.78" y="308.2" textLength="50.0" lengthAdjust="spacingAndGlyphs">16 Aug 16:00</text>
</g>
<rect x="0" y="315.0" width="1024" height="0.7" fill="#6e6e6e"/>
<rect x="0" y="315.5" width="1024" height="2.5" fill="#fdfdfd"/>
<rect x="0" y="317.0" width="1024" height="1.0" fill="#2e2e2e"/>
<defs>
<linearGradient id="pg" gradientUnits="userSpaceOnUse" x1="0" y1="-2" x2="0" y2="41.7"><stop offset="0" stop-color="#4a4aec"/><stop offset="0.55" stop-color="#2424d6"/><stop offset="1" stop-color="#0808b4"/></linearGradient>
</defs>
<rect x="5.5" y="-2" width="174.3" height="43.7" fill="url(#pg)"/>
<rect x="92.2" y="10" width="1.8" height="31.7" fill="#03032a"/>
<rect x="9" y="9.9" width="34.5" height="0.9" fill="#1c1cb4"/><rect x="9" y="10.8" width="34.5" height="0.9" fill="#7c7cf4"/>
<rect x="142" y="9.9" width="34.5" height="0.9" fill="#1c1cb4"/><rect x="142" y="10.8" width="34.5" height="0.9" fill="#7c7cf4"/>
<rect x="47" y="-2" width="91" height="12.3" fill="#05050f"/>
<rect x="49.2" y="-2" width="87.2" height="10.7" fill="#f0f0f0"/>
<rect x="50.8" y="-2" width="14.3" height="9" fill="#d2d2d2"/>
<rect x="119.5" y="-2" width="14.3" height="9" fill="#d2d2d2"/>
<rect x="66.9" y="-2" width="51.1" height="10.2" fill="#fff"/>
<g font-family="'Liberation Sans', sans-serif">
<text x="95.9" y="3.6" font-size="10.5px" fill="#333" textLength="17.9" lengthAdjust="spacingAndGlyphs">0.03</text>
<text x="56" y="1.6" font-size="8px" fill="#3a3a66">▾</text>
<text x="124.5" y="1.6" font-size="8px" fill="#3a4ab0">▴</text>
<text x="14.7" y="4.6" font-size="11px" fill="#cfcffa" textLength="21" lengthAdjust="spacingAndGlyphs">SELL</text>
<text x="148.7" y="4.6" font-size="11px" fill="#cfcffa" textLength="17.6" lengthAdjust="spacingAndGlyphs">BUY</text>
<g fill="#fff">
<text x="18.6" y="35.7" font-size="10.5px" font-weight="bold" textLength="21" lengthAdjust="spacingAndGlyphs">1.14</text>
<text x="44.2" y="36" font-size="32px" stroke="url(#pg)" stroke-width="0.55" textLength="30" lengthAdjust="spacingAndGlyphs">37</text>
<text x="76.6" y="22.6" font-size="11.5px" font-weight="bold">4</text>
<text x="107" y="35.7" font-size="10.5px" font-weight="bold" textLength="21" lengthAdjust="spacingAndGlyphs">1.14</text>
<text x="131.6" y="36" font-size="32px" stroke="url(#pg)" stroke-width="0.55" textLength="30" lengthAdjust="spacingAndGlyphs">39</text>
<text x="164.6" y="22.6" font-size="11.5px" font-weight="bold">9</text>
</g></g>
</svg>
<div class="tabs">
<span class="tab" style="left:13.8px">USDJPY,H1</span><span class="sep"></span><span class="tab" style="left:86.2px;transform:scaleX(.863)">EURJPY,H1</span>
<div class="atab"><span>EURUSD,H1</span></div>
<i class="nl"></i><i class="nr"></i>
</div>
<div class="band"></div>
<div class="grid">
<div class="hdr">
<div class="hc" style="left:0px;width:97.5px"><span>زمن</span></div>
<div class="hc" style="left:97.5px;width:81.3px"><span>النوع</span></div>
<div class="hc" style="left:178.8px;width:65.0px"><span>الحجم</span></div>
<div class="hc" style="left:243.8px;width:81.2px"><span>رمز</span></div>
<div class="hc" style="left:325px;width:81.0px"><span>سعر</span></div>
<div class="hc lat" style="left:406px;width:81.6px"><span>S / L</span></div>
<div class="hc lat" style="left:487.6px;width:81.3px"><span>T / P</span></div>
<div class="hc" style="left:568.9px;width:179.7px"><span style="right:21.3px">زمن</span></div>
<div class="hc" style="left:748.6px;width:81.4px"><span>سعر</span></div>
<div class="hc" style="left:830px;width:81.2px"><span>تبادل</span></div>
<div class="hc" style="left:911.2px;width:99.0px"><span style="right:5.3px">الربح</span></div>
<svg class="sort" width="9" height="8" viewBox="0 0 9 8"><path d="M0.6 7 L4.3 0.8" stroke="#b4b4b4" stroke-width="1" fill="none"/><path d="M4.3 0.8 L8 7 L0.6 7" stroke="#e9e9e9" stroke-width="1" fill="none"/></svg>
</div>
<div class="row sel" style="top:21.10px">
<div class="c" style="left:0px;width:97.5px"><span>2017.05.04 00:02:02</span></div>
<div class="c" style="left:97.5px;width:81.3px"><span class="a">buy</span></div>
<div class="c" style="left:178.8px;width:65.0px"><span>0.03</span></div>
<div class="c" style="left:243.8px;width:81.2px"><span class="a">eurusd</span></div>
<div class="c" style="left:325px;width:81.0px"><span>1.08893</span></div>
<div class="c" style="left:406px;width:81.6px"><span>1.07569</span></div>
<div class="c" style="left:487.6px;width:81.3px"><span>1.13620</span></div>
<div class="c" style="left:568.9px;width:179.7px"><span>2017.05.08 00:09:29</span></div>
<div class="c" style="left:748.6px;width:81.4px"><span>1.10058</span></div>
<div class="c" style="left:830px;width:81.2px"><span>0.00</span></div>
<div class="c" style="left:911.2px;width:99.0px"><span style="right:3.8px">34.95</span></div>
</div>
<div class="row" style="top:39.32px">
<div class="c" style="left:0px;width:97.5px"><span>2017.05.04 00:06:51</span></div>
<div class="c" style="left:97.5px;width:81.3px"><span class="a">buy</span></div>
<div class="c" style="left:178.8px;width:65.0px"><span>0.03</span></div>
<div class="c" style="left:243.8px;width:81.2px"><span class="a">euraud</span></div>
<div class="c" style="left:325px;width:81.0px"><span>1.46686</span></div>
<div class="c" style="left:406px;width:81.6px"><span>1.44162</span></div>
<div class="c" style="left:487.6px;width:81.3px"><span>1.55588</span></div>
<div class="c" style="left:568.9px;width:179.7px"><span>2017.05.08 00:09:31</span></div>
<div class="c" style="left:748.6px;width:81.4px"><span>1.48460</span></div>
<div class="c" style="left:830px;width:81.2px"><span>0.00</span></div>
<div class="c" style="left:911.2px;width:99.0px"><span style="right:3.8px">39.44</span></div>
</div>
<div class="row alt" style="top:57.54px">
<div class="c" style="left:0px;width:97.5px"><span>2017.05.04 00:09:54</span></div>
<div class="c" style="left:97.5px;width:81.3px"><span class="a">buy</span></div>
<div class="c" style="left:178.8px;width:65.0px"><span>0.03</span></div>
<div class="c" style="left:243.8px;width:81.2px"><span class="a">eurjpy</span></div>
<div class="c" style="left:325px;width:81.0px"><span>122.729</span></div>
<div class="c" style="left:406px;width:81.6px"><span>119.713</span></div>
<div class="c" style="left:487.6px;width:81.3px"><span>130.417</span></div>
<div class="c" style="left:568.9px;width:179.7px"><span>2017.05.08 00:09:33</span></div>
<div class="c" style="left:748.6px;width:81.4px"><span>124.280</span></div>
<div class="c" style="left:830px;width:81.2px"><span>0.00</span></div>
<div class="c" style="left:911.2px;width:99.0px"><span style="right:3.8px">41.21</span></div>
</div>
<div class="row" style="top:75.76px">
<div class="c" style="left:0px;width:97.5px"><span>2017.05.04 00:33:02</span></div>
<div class="c" style="left:97.5px;width:81.3px"><span class="a">buy</span></div>
<div class="c" style="left:178.8px;width:65.0px"><span>0.03</span></div>
<div class="c" style="left:243.8px;width:81.2px"><span class="a">eurnzd</span></div>
<div class="c" style="left:325px;width:81.0px"><span>1.58222</span></div>
<div class="c" style="left:406px;width:81.6px"><span>1.53197</span></div>
<div class="c" style="left:487.6px;width:81.3px"><span>1.70583</span></div>
<div class="c" style="left:568.9px;width:179.7px"><span>2017.05.08 00:09:35</span></div>
<div class="c" style="left:748.6px;width:81.4px"><span>1.59404</span></div>
<div class="c" style="left:830px;width:81.2px"><span>0.00</span></div>
<div class="c" style="left:911.2px;width:99.0px"><span style="right:3.8px">24.48</span></div>
</div>
<div class="row alt" style="top:93.98px">
<div class="c" style="left:0px;width:97.5px"><span>2017.05.04 01:40:43</span></div>
<div class="c" style="left:97.5px;width:81.3px"><span class="a">buy</span></div>
<div class="c" style="left:178.8px;width:65.0px"><span>0.03</span></div>
<div class="c" style="left:243.8px;width:81.2px"><span class="a">eurcad</span></div>
<div class="c" style="left:325px;width:81.0px"><span>1.49519</span></div>
<div class="c" style="left:406px;width:81.6px"><span>1.46702</span></div>
<div class="c" style="left:487.6px;width:81.3px"><span>1.58922</span></div>
<div class="c" style="left:568.9px;width:179.7px"><span>2017.05.08 00:09:36</span></div>
<div class="c" style="left:748.6px;width:81.4px"><span>1.50294</span></div>
<div class="c" style="left:830px;width:81.2px"><span>0.00</span></div>
<div class="c" style="left:911.2px;width:99.0px"><span style="right:3.8px">17.02</span></div>
</div>
<div class="row" style="top:112.20px">
<div class="c" style="left:0px;width:97.5px"><span>2017.05.03 22:26:47</span></div>
<div class="c" style="left:97.5px;width:81.3px"><span class="a">sell</span></div>
<div class="c" style="left:178.8px;width:65.0px"><span>0.03</span></div>
<div class="c" style="left:243.8px;width:81.2px"><span class="a">gold</span></div>
<div class="c" style="left:325px;width:81.0px"><span>1227.05</span></div>
<div class="c" style="left:406px;width:81.6px"><span>1276.25</span></div>
<div class="c" style="left:487.6px;width:81.3px"><span>1160.88</span></div>
<div class="c" style="left:568.9px;width:179.7px"><span>2017.05.08 01:12:12</span></div>
<div class="c" style="left:748.6px;width:81.4px"><span>1226.11</span></div>
<div class="c" style="left:830px;width:81.2px"><span>0.00</span></div>
<div class="c" style="left:911.2px;width:99.0px"><span style="right:3.8px">25.52</span></div>
</div>
<div class="sb"><i class="up"></i><i class="thumb"></i></div>
</div>
</body></html>
